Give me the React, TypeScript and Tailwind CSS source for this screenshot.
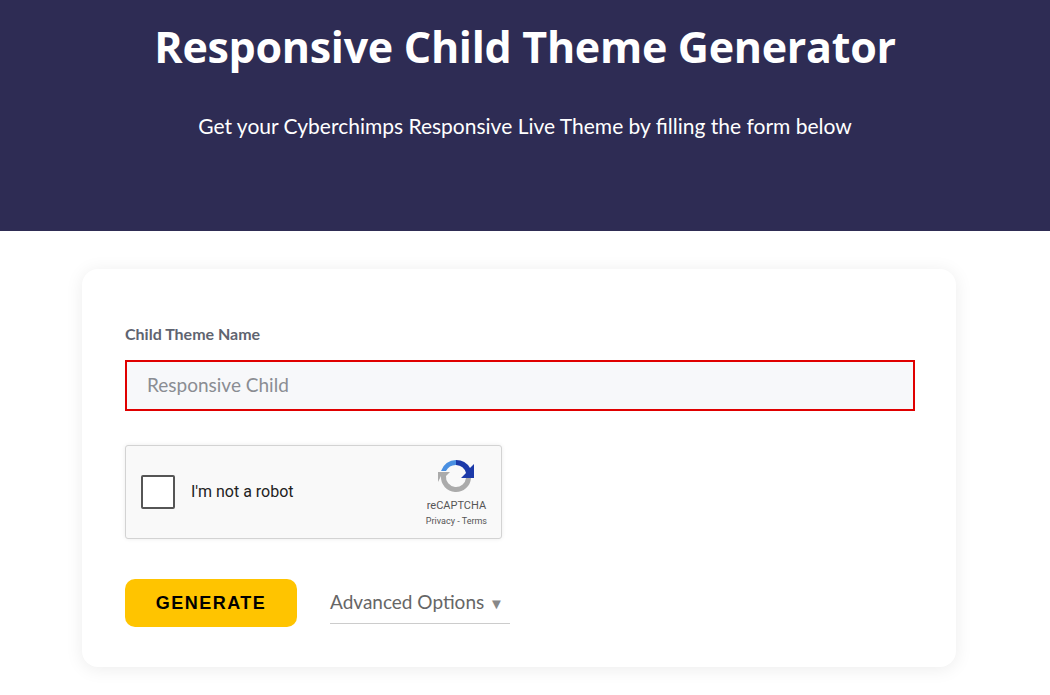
export default function App() {
  return (
    <div className="w-[1050px] h-[695px] bg-white overflow-hidden" style={{ fontFamily: "Lato, 'Liberation Sans', sans-serif" }}>
      <div className="h-[231px] bg-[#2e2c54] flex flex-col items-center">
        <h1 className="text-[43px] font-bold text-white mt-[20px] leading-[54px]" style={{ fontFamily: "'Open Sans', Lato, sans-serif", letterSpacing: "-0.3px" }}>Responsive Child Theme Generator</h1>
        <p className="text-white text-[21px] mt-[36px]">Get your Cyberchimps Responsive Live Theme by filling the form below</p>
      </div>
      <div className="ml-[82px] mt-[38px] w-[874px] h-[398px] rounded-2xl bg-white shadow-[0_2px_18px_rgba(0,0,0,0.08)] pl-[43px] pr-[41px] pt-[53px]">
        <div className="text-[16px] font-bold text-[#5f6470]">Child Theme Name</div>
        <div className="mt-[14px] h-[51px] border-2 border-[#e00000] bg-[#f7f8fa] flex items-center pl-[20px] text-[19px] text-[#8a8d93]">Responsive Child</div>
        <div className="mt-[34px] w-[377px] h-[94px] border border-[#d3d3d3] rounded-[3px] bg-[#f9f9f9] shadow-[0_0_4px_rgba(0,0,0,0.08)] flex items-center" style={{ fontFamily: "Roboto, sans-serif" }}>
          <div className="ml-[15px] w-[34px] h-[34px] border-2 border-[#555] rounded-[2px] bg-white" />
          <div className="ml-[16px] text-[16px] text-[#222]">I'm not a robot</div>
          <div className="ml-auto mr-[14px] flex flex-col items-center">
            <svg width="40" height="40" viewBox="0 0 40 40">
              <path d="M20 4 A16 16 0 0 0 5 15 L10 15 A11 11 0 0 1 20 9 Z" fill="#4a90e2" />
              <path d="M20 4 A16 16 0 0 1 34 12 L38 8 L38 22 L25 22 L30 17 A11 11 0 0 0 20 9 Z" fill="#1c3aa9" />
              <path d="M5 20 A15 15 0 0 0 35 22 L30 22 A10 10 0 0 1 10 20 L14 16 L2 16 L2 26 Z" fill="#ababab" />
            </svg>
            <div className="text-[11px] text-[#555] mt-[2px]">reCAPTCHA</div>
            <div className="text-[9px] text-[#555]">Privacy - Terms</div>
          </div>
        </div>
        <div className="mt-[40px] flex items-center">
          <button className="w-[172px] h-[48px] rounded-[10px] bg-[#ffc400] text-[18px] font-bold tracking-[1.5px] text-black" style={{ fontFamily: "'Liberation Sans', Arial, sans-serif" }}>GENERATE</button>
          <div className="ml-[33px] w-[180px] border-b border-[#ccc] pb-[6px] pt-[6px] text-[19px] text-[#666]">Advanced Options <span className="text-[#888] text-[15px]">▼</span></div>
        </div>
      </div>
    </div>
  );
}
